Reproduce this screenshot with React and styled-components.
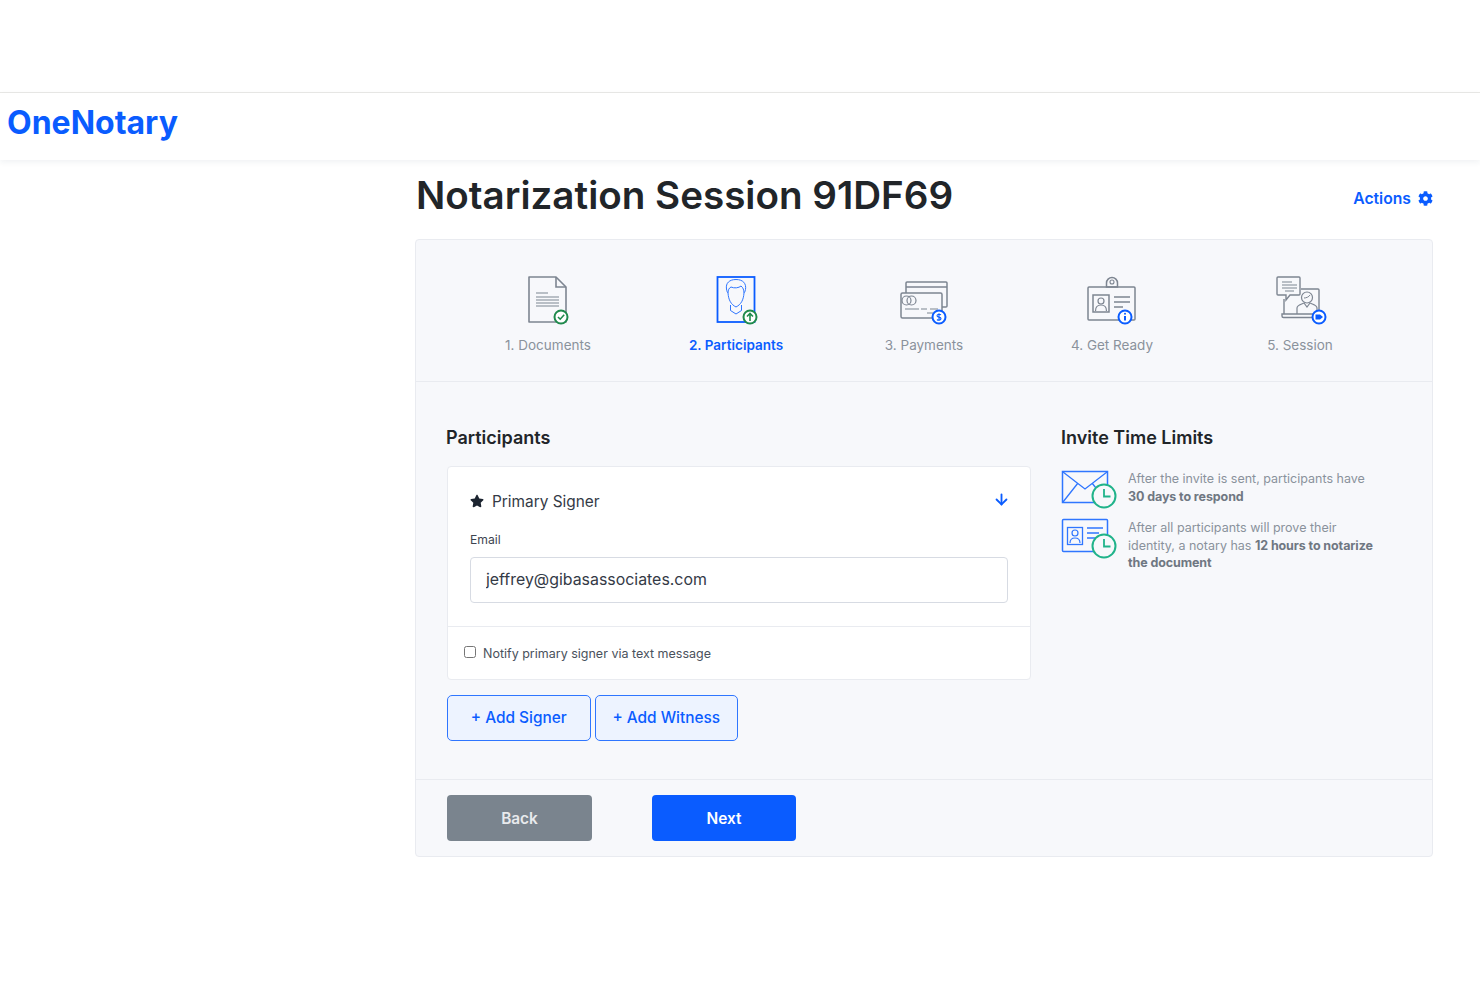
import React from 'react';
import styled, { createGlobalStyle } from 'styled-components';
import { FaCog, FaStar } from 'react-icons/fa';
import { ArrowDown } from 'lucide-react';

const GlobalStyle = createGlobalStyle`
  html, body { margin: 0; padding: 0; background: #fff; }
  body { font-family: Inter, "Open Sans", sans-serif; color: #212529; }
  * { box-sizing: border-box; }
`;

const Page = styled.div`
  width: 1480px;
  height: 987px;
  overflow: hidden;
`;

const TopBlank = styled.div`
  height: 93px;
  border-bottom: 1px solid #e9e9e6;
`;

const Header = styled.header`
  height: 67px;
  display: flex;
  align-items: center;
  padding-left: 7px;
  box-shadow: 0 2px 6px rgba(30, 50, 80, 0.07);
`;

const Logo = styled.div`
  font-size: 32px;
  font-weight: 700;
  color: #0a5cff;
  margin-top: -9px;
`;

const Main = styled.main`
  width: 1018px;
  margin-left: 415px;
`;

const TitleRow = styled.div`
  height: 79px;
  display: flex;
  align-items: center;
  justify-content: space-between;
`;

const Title = styled.h1`
  margin: 0 0 9px 1px;
  font-size: 38.6px;
  font-weight: 600;
  color: #212529;
`;

const Actions = styled.a`
  display: flex;
  align-items: center;
  gap: 7px;
  font-size: 15.7px;
  font-weight: 600;
  color: #0a5cff;
  margin-bottom: 3px;
`;

const Card = styled.section`
  height: 618px;
  background: #f7f8fb;
  border: 1px solid #e9ebf0;
  border-radius: 4px;
`;

const Steps = styled.div`
  height: 142px;
  padding: 32px 38px 0;
  display: grid;
  grid-template-columns: repeat(5, 188px);
  border-bottom: 1px solid #e9ebf0;
`;

const Step = styled.div`
  display: flex;
  flex-direction: column;
  align-items: center;
  gap: 7px;
`;

const StepLabel = styled.span`
  font-size: 13.5px;
  line-height: 20px;
  font-weight: ${p => (p.$active ? 600 : 400)};
  color: ${p => (p.$active ? '#0a5cff' : '#8a929c')};
`;

const Body = styled.div`
  height: 398px;
  padding: 44px 30px 0 31px;
  display: grid;
  grid-template-columns: 584px 1fr;
  column-gap: 30px;
  border-bottom: 1px solid #e9ebf0;
`;

const SectionTitle = styled.h2`
  margin: 0 0 16px ${p => p.$nudge || 0}px;
  font-size: 18px;
  line-height: 24px;
  font-weight: 600;
  color: #212529;
`;

const SignerCard = styled.div`
  background: #fff;
  border: 1px solid #e9ebf0;
  border-radius: 4px;
  height: 214px;
`;

const SignerTop = styled.div`
  height: 160px;
  padding: 24px 20px 0 22px;
  border-bottom: 1px solid #e9ebf0;
`;

const SignerHead = styled.div`
  display: flex;
  align-items: center;
  gap: 8px;
  height: 20px;
  color: #212529;
  font-size: 15.4px;
`;

const SignerName = styled.span`
  flex: 1;
  color: #343a46;
`;

const DownArrow = styled(ArrowDown)`
  margin-top: -4px;
`;

const FieldLabel = styled.label`
  display: block;
  margin: 20px 0 8px;
  font-size: 12.2px;
  line-height: 18px;
  color: #3d4450;
`;

const EmailInput = styled.input`
  display: block;
  width: 538px;
  height: 46px;
  padding: 0 15px 2px;
  border: 1px solid #d7dbe3;
  border-radius: 4px;
  background: #fff;
  font-family: inherit;
  font-size: 15.9px;
  color: #343a46;
  outline: none;
`;

const NotifyRow = styled.label`
  height: 53px;
  display: flex;
  align-items: center;
  gap: 7px;
  padding-left: 16px;
  font-size: 12.5px;
  color: #4a515c;
`;

const Check = styled.input`
  width: 12px;
  height: 12px;
  margin: -3px 0 0;
`;

const AddRow = styled.div`
  display: flex;
  gap: 4px;
  margin-top: 15px;
`;

const AddButton = styled.button`
  width: 143.5px;
  height: 46px;
  padding: 0 0 1px;
  background: #edf3ff;
  border: 1px solid #2f76ff;
  border-radius: 5px;
  font-family: inherit;
  font-size: 15.4px;
  font-weight: 500;
  color: #0a5cff;
`;

const LimitRow = styled.div`
  display: flex;
  gap: 9px;
  margin-bottom: ${p => p.$mb || 0}px;
`;

const LimitIcon = styled.svg`
  flex-shrink: 0;
  margin-top: 2px;
  overflow: visible;
`;

const LimitText = styled.p`
  margin: 4px 0 0;
  width: 252px;
  font-size: 12.5px;
  line-height: 17.5px;
  color: #8a929c;

  b {
    font-weight: 700;
    color: #6f7782;
    letter-spacing: -0.1px;
  }
`;

const Footer = styled.div`
  height: 76px;
  padding: 15px 30px 0 31px;
  display: flex;
  gap: 60px;
`;

const NavButton = styled.button`
  width: ${p => p.$w}px;
  height: 46px;
  border: none;
  border-radius: 4px;
  background: ${p => (p.$primary ? '#0a5cff' : '#7a848e')};
  font-family: inherit;
  font-size: 15.4px;
  font-weight: 600;
  color: ${p => (p.$primary ? '#fff' : '#e8eaed')};
`;

const GRAY = '#7d8591';
const BLUE = '#0a5cff';
const SOFT = '#2f76ff';
const GREEN = '#1f8a4c';
const TEAL = '#20b38a';

// small round badges sitting on the step icons
const Badge = ({ cx, cy, color, children }) => (
  <g>
    <circle cx={cx} cy={cy} r="6.5" fill="#fff" stroke={color} strokeWidth="2" />
    {children}
  </g>
);

const DocIcon = () => (
  <svg width="60" height="56" viewBox="0 0 60 56" fill="none" stroke={GRAY} strokeWidth="1.6">
    <path d="M11 5h27l10 10v35H11z" strokeLinejoin="round" />
    <path d="M38 5v10h10" />
    <path d="M18 21h12M18 25h23M18 28h23M18 31h23M18 34h23" strokeWidth="1.2" />
    <Badge cx="43" cy="45" color={GREEN}>
      <path d="M40 45l2.2 2.2 4-4.4" stroke={GREEN} strokeWidth="1.6" />
    </Badge>
  </svg>
);

const PersonIcon = () => (
  <svg width="60" height="56" viewBox="0 0 60 56" fill="none" stroke={SOFT} strokeWidth="1">
    <rect x="11.5" y="5" width="37" height="45" stroke={BLUE} strokeWidth="1.8" />
    <path d="M20.500 17c-1-6 3-9.500 9.500-9.500 7 0 10.500 4 9.500 10-.3 2-1 3-1.500 3.500-.5 7-3 11.500-8 14-5-2.500-7.500-7-8-14-.8-.8-1.300-2-1.500-4z" />
    <path d="M22 21c0-3 1-5 3-6 3 1.500 8 1 10-1 2 1.500 3 4 3 7" />
    <path d="M24.500 33v5.500l5.500 3.500 5.500-3.500V33" />
    <Badge cx="44" cy="45" color={GREEN}>
      <path d="M44 49v-7M41 44.500l3-3 3 3" stroke={GREEN} strokeWidth="1.6" />
    </Badge>
  </svg>
);

const PayIcon = () => (
  <svg width="60" height="56" viewBox="0 0 60 56" fill="none" stroke={GRAY} strokeWidth="1.5">
    <path d="M12 21v-10a1 1 0 0 1 1-1h39a1 1 0 0 1 1 1v23a1 1 0 0 1-1 1h-4" />
    <path d="M12 15h41" />
    <rect x="7" y="21" width="41" height="25" rx="1.5" fill="#f7f8fb" />
    <circle cx="12.500" cy="28.500" r="4.500" strokeWidth="1.2" />
    <circle cx="17.500" cy="28.500" r="4.500" strokeWidth="1.2" />
    <path d="M11 37h14M27 37h6M36 37h8M33 41h6" strokeWidth="1.2" />
    <circle cx="45" cy="45" r="6.5" fill="#fff" stroke={BLUE} strokeWidth="2" />
    <path d="M47 42.800c-1-.9-4-.9-4 .9s4 1 4 2.900-3 1.900-4 .9M45 41.300v7.400" stroke={BLUE} strokeWidth="1.1" />
  </svg>
);

const BadgeIcon = () => (
  <svg width="60" height="56" viewBox="0 0 60 56" fill="none" stroke={GRAY} strokeWidth="1.5">
    <rect x="6" y="15" width="47" height="33" rx="1" />
    <path d="M24.500 15v-4a5.500 5.500 0 0 1 11 0v4z" />
    <circle cx="30" cy="10" r="2" strokeWidth="1.1" />
    <rect x="11" y="23" width="16" height="17" />
    <circle cx="19" cy="29" r="3" strokeWidth="1.2" />
    <path d="M13.500 39c0-4 2-6 5.500-6s5.500 2 5.500 6" strokeWidth="1.2" />
    <path d="M32 25h16M32 30h16M32 35h9" />
    <circle cx="43" cy="45" r="6.500" fill="#fff" stroke={BLUE} strokeWidth="2" />
    <path d="M43 44v4.500" stroke={BLUE} strokeWidth="2" />
    <circle cx="43" cy="41.800" r="1" fill={BLUE} stroke="none" />
  </svg>
);

const SessionIcon = () => (
  <svg width="60" height="56" viewBox="0 0 60 56" fill="none" stroke={GRAY} strokeWidth="1.4">
    <path d="M14 42V27M31 17h17a1 1 0 0 1 1 1v24" />
    <path d="M12 42h39v2a1.500 1.500 0 0 1-1.500 1.500h-36a1.500 1.500 0 0 1-1.500-1.500z" />
    <path d="M8 5h21a1 1 0 0 1 1 1v16a1 1 0 0 1-1 1H20l-4 5v-5H8a1 1 0 0 1-1-1V6a1 1 0 0 1 1-1z" fill="#f7f8fb" />
    <path d="M12 10h10M12 13h15M12 16h15M15 19h9" strokeWidth="1.100" />
    <circle cx="37" cy="25.500" r="5.500" strokeWidth="1.200" />
    <path d="M34 26c2 0 5-1 6-3" strokeWidth="1" />
    <path d="M27 42v-6c0-3 5-4 7-5M47 42v-6c0-3-5-4-7-5M34 31l3 4 3-4" strokeWidth="1.200" />
    <circle cx="49" cy="45" r="6.500" fill="#fff" stroke={BLUE} strokeWidth="2" />
    <path d="M45.500 42.500h4.500l3 2.500-3 2.500h-4.500z" fill={BLUE} stroke="none" />
  </svg>
);

const Clock = () => (
  <g>
    <circle cx="43" cy="28" r="11.500" fill="#f7f8fb" stroke={TEAL} strokeWidth="2" />
    <path d="M43 21v7.500h6.500" stroke={TEAL} strokeWidth="1.800" fill="none" />
  </g>
);

const MailClock = () => (
  <LimitIcon width="58" height="38" viewBox="0 0 58 38" fill="none">
    <rect x="1.500" y="3.500" width="45" height="31" stroke={SOFT} strokeWidth="1.500" />
    <path d="M2 4l22 17 22-17M2 34l15-19M46 34L31 15" stroke={SOFT} strokeWidth="1.300" />
    <Clock />
  </LimitIcon>
);

const IdClock = () => (
  <LimitIcon width="58" height="38" viewBox="0 -1 58 38" fill="none">
    <rect x="1.500" y="1.500" width="45" height="32" rx="1" stroke={SOFT} strokeWidth="1.500" />
    <rect x="6.500" y="9.500" width="15" height="17" stroke={SOFT} strokeWidth="1.300" />
    <circle cx="14" cy="15" r="3" stroke={SOFT} strokeWidth="1.200" />
    <path d="M9 25c0-3.500 2-5 5-5s5 1.500 5 5" stroke={SOFT} strokeWidth="1.200" />
    <path d="M26 10h16M26 15h12M26 20h9" stroke={SOFT} strokeWidth="1.300" />
    <Clock />
  </LimitIcon>
);

const STEPS = [
  { label: '1. Documents', icon: <DocIcon /> },
  { label: '2. Participants', icon: <PersonIcon />, active: true },
  { label: '3. Payments', icon: <PayIcon /> },
  { label: '4. Get Ready', icon: <BadgeIcon /> },
  { label: '5. Session', icon: <SessionIcon /> },
];

export default function App() {
  return (
    <Page>
      <GlobalStyle />
      <TopBlank />
      <Header>
        <Logo>OneNotary</Logo>
      </Header>
      <Main>
        <TitleRow>
          <Title>Notarization Session 91DF69</Title>
          <Actions>
            Actions <FaCog size={15} />
          </Actions>
        </TitleRow>
        <Card>
          <Steps>
            {STEPS.map(s => (
              <Step key={s.label}>
                {s.icon}
                <StepLabel $active={s.active}>{s.label}</StepLabel>
              </Step>
            ))}
          </Steps>
          <Body>
            <div>
              <SectionTitle $nudge={-1}>Participants</SectionTitle>
              <SignerCard>
                <SignerTop>
                  <SignerHead>
                    <FaStar size={14} color="#1c2430" />
                    <SignerName>Primary Signer</SignerName>
                    <DownArrow size={17} strokeWidth={2.6} color={BLUE} />
                  </SignerHead>
                  <FieldLabel>Email</FieldLabel>
                  <EmailInput readOnly value="jeffrey@gibasassociates.com" />
                </SignerTop>
                <NotifyRow>
                  <Check type="checkbox" />
                  Notify primary signer via text message
                </NotifyRow>
              </SignerCard>
              <AddRow>
                <AddButton>+ Add Signer</AddButton>
                <AddButton>+ Add Witness</AddButton>
              </AddRow>
            </div>
            <div>
              <SectionTitle>Invite Time Limits</SectionTitle>
              <LimitRow $mb={9}>
                <MailClock />
                <LimitText>
                  After the invite is sent, participants have <b>30 days to respond</b>
                </LimitText>
              </LimitRow>
              <LimitRow>
                <IdClock />
                <LimitText>
                  After all participants will prove their identity, a notary has{' '}
                  <b>12 hours to notarize the document</b>
                </LimitText>
              </LimitRow>
            </div>
          </Body>
          <Footer>
            <NavButton $w={145}>Back</NavButton>
            <NavButton $w={144} $primary>Next</NavButton>
          </Footer>
        </Card>
      </Main>
    </Page>
  );
}
